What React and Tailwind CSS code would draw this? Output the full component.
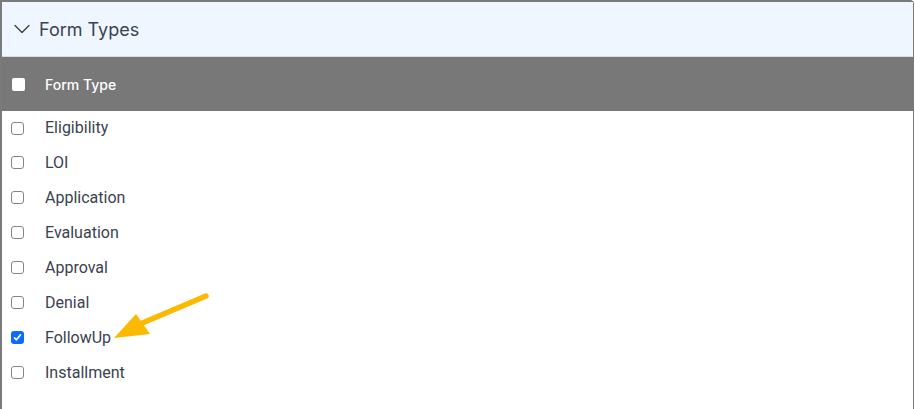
import { useState } from 'react';

const FORM_TYPES = [
  { id: 'eligibility', label: 'Eligibility' },
  { id: 'loi', label: 'LOI' },
  { id: 'application', label: 'Application' },
  { id: 'evaluation', label: 'Evaluation' },
  { id: 'approval', label: 'Approval' },
  { id: 'denial', label: 'Denial' },
  { id: 'followup', label: 'FollowUp' },
  { id: 'installment', label: 'Installment' },
];

function Chevron() {
  return (
    <svg width="18" height="18" viewBox="0 0 18 18" fill="none" className="shrink-0">
      <path d="M2 5.5l7 7 7-7" stroke="#374151" strokeWidth="1.4" strokeLinecap="round" strokeLinejoin="round" />
    </svg>
  );
}

function Box({ checked, onToggle }) {
  return (
    <button
      type="button"
      onClick={onToggle}
      className={
        checked
          ? 'w-[13px] h-[13px] rounded-[3px] bg-[#0b6bff] flex items-center justify-center shrink-0'
          : 'w-[13px] h-[13px] rounded-[3px] bg-white border border-[#858585] shrink-0'
      }
    >
      {checked && (
        <svg width="9" height="9" viewBox="0 0 9 9" fill="none">
          <path d="M1.5 4.8l2 2 4-5" stroke="white" strokeWidth="1.7" strokeLinecap="round" strokeLinejoin="round" />
        </svg>
      )}
    </button>
  );
}

function Pointer() {
  // highlight arrow laid over the list
  return (
    <svg className="absolute left-0 top-0 pointer-events-none" width="230" height="360" viewBox="0 0 230 360">
      <path d="M206 296 L140 324" stroke="#FBBA00" strokeWidth="5.5" strokeLinecap="round" />
      <polygon points="114,338 136,314 150,334" fill="#FBBA00" />
    </svg>
  );
}

export default function App() {
  const [checked, setChecked] = useState({ followup: true });

  return (
    <div className="w-[915px] h-[409px] bg-white relative overflow-hidden" style={{ fontFamily: 'Roboto, sans-serif' }}>
      <div className="w-[914px] h-[420px] border-2 border-[#7a7a7a] border-r rounded-tr-[4px] flex flex-col">
        {/* Panel header */}
        <div className="h-[55px] bg-[#eff6ff] border-b border-[#d9dde3] flex items-center gap-[8px] pl-[11px] shrink-0">
          <Chevron />
          <span className="text-[18px] text-[#3b4352] font-['Inter',sans-serif]">Form Types</span>
        </div>

        {/* Table header */}
        <div className="h-[54px] bg-[#787878] flex items-center pl-[10px] shrink-0">
          <span className="w-[13px] h-[13px] rounded-[2px] bg-white shrink-0" />
          <span className="ml-[20px] text-[14px] font-medium text-white font-['Inter',sans-serif]">Form Type</span>
        </div>

        {/* Rows */}
        <div className="flex flex-col">
          {FORM_TYPES.map((t, i) => (
            <div key={t.id} className={(i === 0 ? 'h-[34px]' : 'h-[35px]') + ' flex items-center pl-[9px]'}>
              <Box
                checked={!!checked[t.id]}
                onToggle={() => setChecked(c => ({ ...c, [t.id]: !c[t.id] }))}
              />
              <span className="ml-[21px] text-[16px] text-[#3a4250]">{t.label}</span>
            </div>
          ))}
        </div>
      </div>
      <Pointer />
    </div>
  );
}
